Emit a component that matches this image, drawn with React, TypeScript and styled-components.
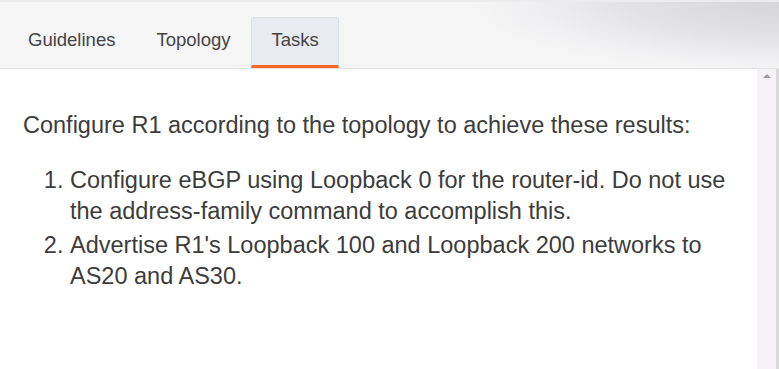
import React from "react";
import styled, { createGlobalStyle } from "styled-components";

const Global = createGlobalStyle`
  html, body { margin: 0; padding: 0; background: #fff; }
  body { font-family: "Liberation Sans", Arial, sans-serif; }
  * { box-sizing: border-box; }
`;

const Page = styled.div`
  width: 779px;
  height: 369px;
  display: flex;
  flex-direction: column;
  overflow: hidden;
  background: #fff;
`;

const Header = styled.div`
  height: 69px;
  flex: none;
  display: flex;
  align-items: flex-end;
  padding: 0 0 0 8px;
  border-top: 2px solid #ececec;
  border-bottom: 1px solid #e4e4e4;
  background:
    radial-gradient(ellipse 330px 70px at 800px 0px, #d4d4d6 0%, #e2e2e4 50%, #f1f0f2 85%, rgba(245,245,245,0) 100%),
    #f5f5f5;
`;

const TabList = styled.div`
  display: flex;
  align-items: flex-end;
  gap: 1px;
`;

const Tab = styled.div<{ $active?: boolean }>`
  height: 51px;
  padding: 0 19px 3px;
  display: flex;
  align-items: center;
  font-size: 18.5px;
  color: #444;
  background: ${(p) => (p.$active ? "#e8ebef" : "transparent")};
  border: 1px solid ${(p) => (p.$active ? "#dde0e4" : "transparent")};
  border-bottom: 3px solid ${(p) => (p.$active ? "#f26522" : "transparent")};
  border-radius: 3px 3px 0 0;
`;

const Body = styled.div`
  flex: 1;
  display: flex;
  min-height: 0;
`;

const Content = styled.div`
  flex: 1;
  padding: 41px 0 0 23px;
  color: #3c3c3c;
  font-size: 23.5px;
  line-height: 31px;
`;

const Intro = styled.p`
  margin: 0 0 24px 0;
`;

const List = styled.ol`
  margin: 0;
  padding-left: 47px;
  width: 720px;
`;

const Item = styled.li`
  margin-bottom: 3px;
`;

const Scrollbar = styled.div`
  width: 22px;
  flex: none;
  display: flex;
  background: #f4f2f5;
  border-right: 3px solid #dadada;
  justify-content: center;
  padding-top: 5px;
`;

const Arrow = styled.div`
  width: 0;
  height: 0;
  border-left: 4px solid transparent;
  border-right: 4px solid transparent;
  border-bottom: 4px solid #a0a0a0;
`;

export default function App() {
  return (
    <Page>
      <Global />
      <Header>
        <TabList>
          <Tab>Guidelines</Tab>
          <Tab>Topology</Tab>
          <Tab $active>Tasks</Tab>
        </TabList>
      </Header>
      <Body>
        <Content>
          <Intro>Configure R1 according to the topology to achieve these results:</Intro>
          <List>
            <Item>
              Configure eBGP using Loopback 0 for the router-id. Do not use the address-family command to accomplish this.
            </Item>
            <Item>Advertise R1's Loopback 100 and Loopback 200 networks to AS20 and AS30.</Item>
          </List>
        </Content>
        <Scrollbar>
          <Arrow />
        </Scrollbar>
      </Body>
    </Page>
  );
}
